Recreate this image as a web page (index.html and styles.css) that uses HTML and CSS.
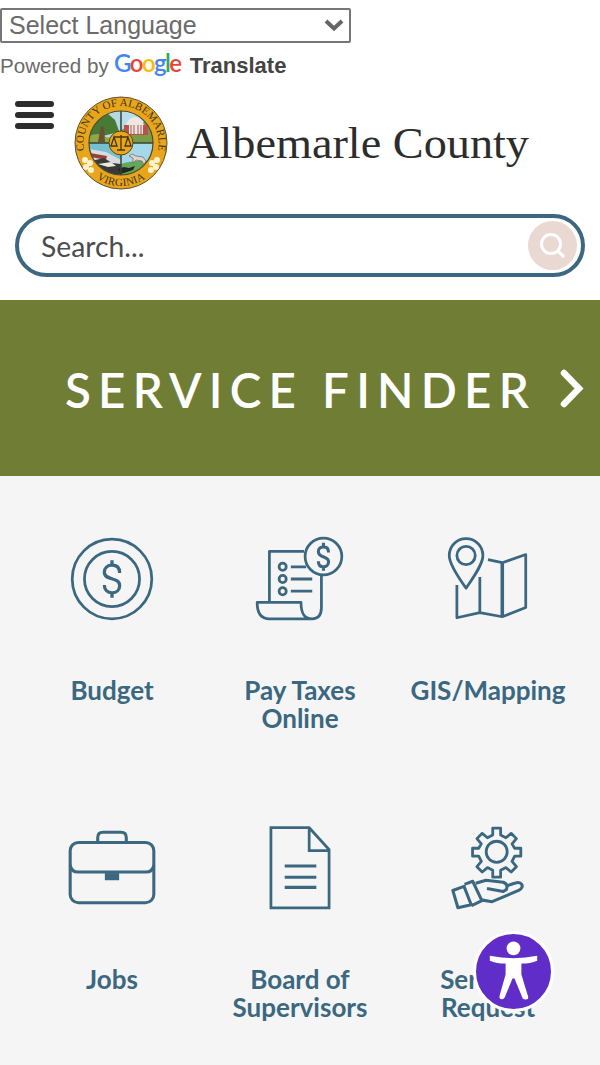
FILE: index.html
```html
<!DOCTYPE html>
<html lang="en">

<head>
    <meta charset="UTF-8">
    <title>Albemarle County</title>
    <link rel="stylesheet" href="styles.css">
</head>

<body>
    <!-- Translate widget -->
    <div class="translate">
        <div class="language-select">
            <span>Select Language</span>
            <svg width="20" height="14" viewBox="0 0 20 14"><path d="M2 2l8 7.500 8-7.500" /></svg>
        </div>
        <div class="powered">
            <span>Powered by</span>
            <svg class="google" width="70" height="34" viewBox="0 0 70 34">
                <text x="0" y="23" textLength="68"><tspan fill="#4285f4">G</tspan><tspan fill="#ea4335">o</tspan><tspan fill="#fbbc05">o</tspan><tspan fill="#4285f4">g</tspan><tspan fill="#34a853">l</tspan><tspan fill="#ea4335">e</tspan></text>
            </svg>
            <b>Translate</b>
        </div>
    </div>

    <header class="header">
        <div class="menu">
            <span></span>
            <span></span>
            <span></span>
        </div>
        <svg class="seal" width="94" height="94" viewBox="0 0 94 94">
            <defs>
                <clipPath id="scene"><circle cx="47" cy="47" r="32" /></clipPath>
                <path id="arcTop" d="M12 61a37.500 37.500 0 1 1 70 0" />
                <path id="arcBottom" d="M6 60a43 43 0 0 0 82 0" />
            </defs>
            <circle cx="47" cy="47" r="46" fill="#e9a51c" stroke="#5d502f" stroke-width="1" />
            <g clip-path="url(#scene)">
                <path d="M15 15h32v32H15z" fill="#b5d9e3" />
                <path d="M15 35l9-16 9-2 8 7 4 11-8 3-22 5z" fill="#477a35" />
                <path d="M15 40q10-4 15 0t17-2v10H15z" fill="#8fa846" />
                <path d="M24 46l3-16 3 1 1 15z" fill="#6b5130" />
                <path d="M47 15h33v32H47z" fill="#b9ddeb" />
                <path d="M47 34l10-5 14-3 9 10v11H47z" fill="#799d45" />
                <path d="M50 29h24v10H50z" fill="#b8524b" />
                <path d="M52 29q3-8 9-8t9 8zM55 29h14v9H55z" fill="#f0e6e2" />
                <path d="M57 29v9M60 29v9M64 29v9M67 29v9" stroke="#a65450" />
                <path d="M15 47h32v33H15z" fill="#77bfd2" />
                <path d="M15 53l17 3 15 8v16H15z" fill="#d8dcdc" />
                <path d="M16 57l17 3-1 4-15-3z" fill="#97413c" />
                <path d="M17 65l13-3 8 5 9 1v12H28z" fill="#363b38" />
                <path d="M24 68l13-2 5 4-8 1z" fill="#e9e9e2" />
                <path d="M47 47h33v33H47z" fill="#a3d9e8" />
                <path d="M47 68q15-5 33-3v15H47z" fill="#67a75a" />
                <path d="M55 60l3-2 4 2 7 1 3 4-2 4-2-4-6-1-3 3v-5z" fill="#ddd6d0" stroke="#68645c" stroke-width=".7" />
                <path d="M44 73l6-2 5 1 6-2-2 4-12 4z" fill="#20291d" />
            </g>
            <circle cx="47" cy="47" r="32" fill="none" stroke="#4c4a35" stroke-width="1.200" />
            <path d="M47 15v64M15 47h64" stroke="#3b4034" stroke-width="1.500" />
            <circle cx="47" cy="47" r="12" fill="#e9a51c" stroke="#574516" />
            <path d="M47 39v15M40 41h14M43 54h8M40 41l-3 9h6zM54 41l-3 9h6z" fill="none" stroke="#443714" stroke-width="1.300" />
            <g fill="#fff5cf">
                <circle cx="11" cy="64" r="3" /><circle cx="16" cy="67" r="3" /><circle cx="12" cy="71" r="3" /><circle cx="17" cy="74" r="3" />
                <circle cx="83" cy="64" r="3" /><circle cx="78" cy="67" r="3" /><circle cx="82" cy="71" r="3" /><circle cx="77" cy="74" r="3" />
            </g>
            <text class="seal-text"><textPath href="#arcTop" startOffset="50%" text-anchor="middle" textLength="132">COUNTY OF ALBEMARLE</textPath></text>
            <text class="seal-text"><textPath href="#arcBottom" startOffset="50%" text-anchor="middle" textLength="52">VIRGINIA</textPath></text>
        </svg>
        <svg class="site-name" width="350" height="60" viewBox="0 0 350 60">
            <text x="1" y="43" textLength="343" lengthAdjust="spacingAndGlyphs">Albemarle County</text>
        </svg>
    </header>

    <div class="search">
        <span>Search...</span>
        <div class="search-button">
            <svg width="30" height="30" viewBox="0 0 30 30">
                <circle cx="13" cy="13" r="9.500" />
                <path d="M20 20l6 6" />
            </svg>
        </div>
    </div>

    <div class="finder">
        <span>SERVICE FINDER</span>
        <svg width="28" height="42" viewBox="0 0 28 42"><path d="M5 5l15 15.500L5 36" /></svg>
    </div>

    <main class="services">
        <div class="service">
            <svg viewBox="0 0 100 100">
                <circle cx="50" cy="50" r="39" />
                <circle cx="50" cy="50" r="27" />
                <path d="M57.500 44c0-5-3-7.500-7.500-7.500s-7.500 3-7.500 7c0 8.500 15 4 15 13 0 4-3 7-7.500 7s-7.500-3-7.500-7.500M50 31.500v5M50 63.500v5" stroke-width="3.200" />
            </svg>
            <span>Budget</span>
        </div>
        <div class="service">
            <svg viewBox="0 0 100 100">
                <circle cx="73" cy="28" r="18" />
                <path d="M78 24c0-4-2-5.500-5-5.500s-5 2-5 4.500c0 7 10 4 10 10 0 3-2 5-5 5s-5-2-5-5.500M73 14.500v4M73 38v4" stroke-width="3" />
                <path d="M54 23H20v50M71 47v31c0 8-4 11-9 11H20c-8 0-12-5-12-16h43c0 11 3 16 11 16" />
                <circle cx="33" cy="38" r="3.500" /><circle cx="33" cy="50" r="3.500" /><circle cx="33" cy="62" r="3.500" />
                <path d="M41 38h15M41 50h21M41 62h21" />
            </svg>
            <span>Pay Taxes<br>Online</span>
        </div>
        <div class="service">
            <svg viewBox="0 0 100 100">
                <path d="M28.500 59C22 50 12 36 12 27c0-9.500 7.500-16.500 16.500-16.500S45 17.500 45 27c0 9-10.500 23-16.500 32z" />
                <circle cx="28.500" cy="27" r="9" />
                <path d="M19.500 56v32l22.500-5 22 4 23-9V26l-23 8-14-3M42 48v35" />
                <path d="M64 34v53" stroke-width="3.500" />
            </svg>
            <span>GIS/Mapping</span>
        </div>
        <div class="service">
            <svg viewBox="0 0 100 100">
                <rect x="9" y="25" width="82" height="59" rx="8" stroke-width="3" />
                <path d="M36 25v-5q0-5 5-5h18q5 0 5 5v5M9 47q1 7 8 7h66q7 0 8-7" stroke-width="3" />
                <path class="solid" d="M43 55h14v7H43z" />
            </svg>
            <span>Jobs</span>
        </div>
        <div class="service">
            <svg viewBox="0 0 100 100">
                <path d="M21.500 10.500H59l19.500 21.500v57h-57zM59 10.500V33h19.500" stroke-linejoin="miter" />
                <path d="M35 48h31M35 59h31M35 69h31" stroke-width="3" />
            </svg>
            <span>Board of<br>Supervisors</span>
        </div>
        <div class="service">
            <svg viewBox="0 0 100 100">
                <g transform="translate(8.200 4) scale(.86)" stroke-width="3.200">
                    <path d="M54 16v-8h9v8l6 3 6-5 6 6-5 6 3 5h7v9h-7l-3 6 5 6-6 6-6-5-6 3v8h-9v-8l-6-3-6 5-6-6 5-6-3-6h-7v-9h7l3-5-5-6 6-6 6 5z" />
                    <circle cx="58.500" cy="35" r="12" />
                </g>
                <path d="M15.500 72l11-4 7 18-13 3zM27 66l8-3 9 19-10 5M38 65l10-3 17 2q5 2 3 7l-3 2-16-3M42 81l12 2 26-11q5-3 3-6-2-3-7-1l-9 3" stroke-width="3" />
            </svg>
            <span>Services<br>Request</span>
        </div>
    </main>

    <!-- Accessibility button -->
    <div class="accessibility">
        <svg width="75" height="75" viewBox="0 0 76 76">
            <circle cx="38" cy="14.500" r="7" />
            <path d="M14 22q24 5 48 0v5q-7 3-16 3v11l7 23q0 3-4 2-2 0-3-4l-7-17h-2l-7 17q-1 4-4 4-3 0-2-4l6-21V30q-9 0-16-3z" />
        </svg>
    </div>
</body>

</html>
```
FILE: styles.css
```css
body {
    margin: 0;
    background: #fff;
    font-family: Lato, sans-serif;
    color: #333;
}

svg {
    display: block;
    flex: none;
}

/* Translate widget */
.translate {
    height: 85px;
    padding-top: 8px;
    box-sizing: border-box;
    font-family: "Liberation Sans", Arial, sans-serif;
    color: #6a6a6a;
}

.language-select {
    display: flex;
    align-items: center;
    justify-content: space-between;
    width: 351px;
    height: 35px;
    padding: 0 5px 0 7px;
    box-sizing: border-box;
    border: 2px solid #767676;
    border-radius: 2px;
    font-size: 25px;
}

.language-select path {
    fill: none;
    stroke: #666;
    stroke-width: 4;
}

.powered {
    display: flex;
    align-items: center;
    height: 46px;
    font-size: 20.6px;
}

.google {
    margin: 0 6px 0 5px;
    font: 600 24px Lato, sans-serif;
}

.powered b {
    font-size: 22px;
    color: #444;
}

/* Header */
.header {
    display: flex;
    align-items: flex-start;
    height: 129px;
    padding: 11px 0 0 15px;
    box-sizing: border-box;
}

.menu {
    display: flex;
    flex-direction: column;
    gap: 5px;
    width: 39px;
    padding-top: 5px;
}

.menu span {
    height: 6px;
    border-radius: 3px;
    background: #2d2d2d;
}

.seal {
    margin-left: 20px;
}

.seal-text {
    font: 11px "Liberation Serif", serif;
    fill: #3f3518;
}

.site-name {
    margin: 19px 0 0 17px;
    font: 43.5px "Liberation Serif", serif;
    fill: #2d2d2d;
}

/* Search */
.search {
    display: flex;
    align-items: center;
    justify-content: space-between;
    height: 63px;
    margin: 0 15px 23px;
    padding: 0 4px 0 22px;
    box-sizing: border-box;
    border: 4px solid #3b6880;
    border-radius: 32px;
    font-size: 28.3px;
    color: #4c4c4c;
}

.search-button {
    display: flex;
    align-items: center;
    justify-content: center;
    width: 49px;
    height: 49px;
    border-radius: 50%;
    background: #ead9d3;
}

.search-button svg {
    fill: none;
    stroke: #fff;
    stroke-width: 3;
}

/* Service finder banner */
.finder {
    display: flex;
    align-items: center;
    height: 176px;
    padding: 2px 0 0 65px;
    box-sizing: border-box;
    background: #707d35;
    color: #fff;
    font-size: 47.5px;
    font-weight: 600;
    letter-spacing: 7.2px;
    white-space: nowrap;
}

.finder svg {
    margin-left: 23px;
    fill: none;
    stroke: #fff;
    stroke-width: 6.5;
    stroke-linecap: round;
}

/* Services */
.services {
    display: grid;
    grid-template-columns: repeat(3, 188px);
    grid-auto-rows: 289px;
    justify-content: center;
    height: 589px;
    padding-top: 52px;
    box-sizing: border-box;
    background: #f5f5f5;
}

.service {
    display: flex;
    flex-direction: column;
    align-items: center;
    gap: 46px;
    color: #3b6880;
    font-size: 26px;
    font-weight: 700;
    line-height: 28px;
    text-align: center;
}

.service svg {
    width: 102px;
    height: 102px;
    fill: none;
    stroke: #3b6880;
    stroke-width: 2.7;
    stroke-linejoin: round;
}

.service .solid {
    fill: #3b6880;
    stroke: none;
}

.accessibility {
    position: fixed;
    left: 473px;
    top: 931px;
    border: 3px solid #fff;
    border-radius: 50%;
    background: #602dc9;
}

.accessibility svg {
    fill: #fff;
}
```
